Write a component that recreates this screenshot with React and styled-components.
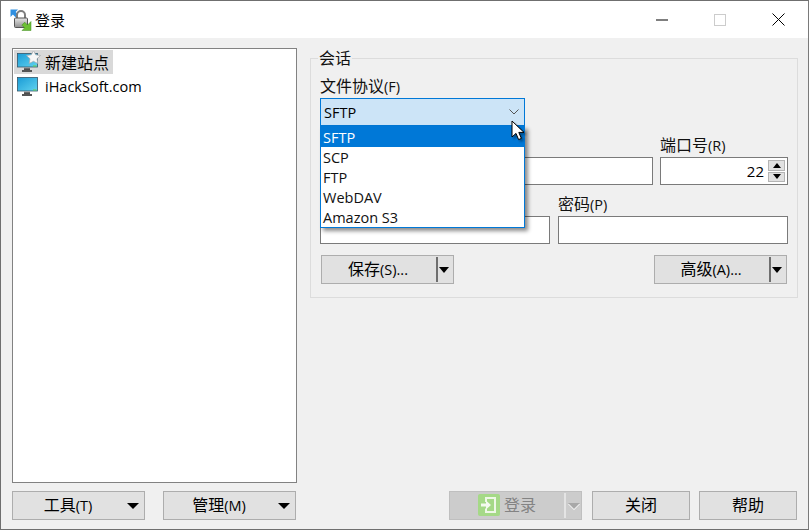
import React from "react";
import styled, { createGlobalStyle } from "styled-components";

const Global = createGlobalStyle`
  html, body { margin: 0; padding: 0; background: #f0f0f0; }
  * { box-sizing: border-box; }
  body { font-family: "Open Sans", "Noto Sans CJK SC", sans-serif; font-size: 14.5px; color: #111; }
`;

const Win = styled.div`
  width: 809px; height: 530px; border: 1px solid #6f6f6f; border-right-color: #7a7a7a;
  display: flex; flex-direction: column; background: #f0f0f0; overflow: hidden;
`;
const TitleBar = styled.div`
  height: 37px; background: #fff; display: flex; align-items: center; padding-left: 9px; flex: none;
`;
const TitleText = styled.span`
  font-size: 15px; margin-left: 3px; flex: 1; color: #000;
`;
const Ctl = styled.div`
  width: ${p => p.$w || 58}px; height: 37px; display: flex; align-items: center; justify-content: center;
`;
const Client = styled.div`
  flex: 1; min-height: 0; display: grid; grid-template-columns: 285px 1fr;
  grid-template-rows: 1fr 29px; column-gap: 13px; row-gap: 8px; padding: 10px 10px 9px 11px;
`;
const Tree = styled.div`
  background: #fff; border: 1px solid #828282; padding: 1px; display: flex; flex-direction: column; align-items: flex-start;
`;
const TreeItem = styled.div`
  height: 24px; display: flex; align-items: center; gap: 4px; padding: 0 3px 0 3px; width: ${p => p.$w || "auto"};
  background: ${p => (p.$sel ? "#d9d9d9" : "transparent")}; font-size: 14.5px; color: #000; white-space: nowrap;
`;
const Cjk = styled.span`
  font-size: 16px; line-height: 20px;
`;
const TreeCjk = styled(Cjk)`
  margin-top: 2px;
`;
const Group = styled.div`
  position: relative; margin-top: 10px; height: 240px; border: 1px solid #dcdcdc; padding: 18px 9px 0 9px;
`;
const Legend = styled.span`
  position: absolute; left: 7px; top: -11px; line-height: 20px; background: #f0f0f0; padding: 0 1px; height: 17px; overflow: visible;
`;
const Field = styled.div`
  position: relative; display: flex; flex-direction: column; min-width: 0;
`;
const Label = styled.label`
  height: 20px; line-height: 16px; margin: -1px 0 2px; font-size: 14.5px; color: #111; white-space: nowrap;
`;
const SelectBox = styled.div`
  width: 205px; height: 28px; border: 1px solid #0078d7; background: #cce4f7; display: flex; align-items: center;
  justify-content: space-between; padding: 0 5px 0 3px; font-size: 14.5px; color: #000;
`;
const Menu = styled.div`
  position: absolute; left: 0; top: 49px; width: 205px; height: 102px; background: #fff; border: 1px solid #0078d7;
  box-shadow: 3px 3px 4px rgba(0,0,0,.45); z-index: 3;
`;
const MenuItem = styled.div`
  height: 20px; line-height: 21px; padding-left: 2px; font-size: 14.5px;
  background: ${p => (p.$sel ? "#0078d7" : "#fff")}; color: ${p => (p.$sel ? "#fff" : "#111")};
`;
const Pointer = styled.svg`
  position: absolute; left: 191px; top: 43px; z-index: 4; filter: drop-shadow(2px 2px 1px rgba(0,0,0,.35));
`;
const Row = styled.div`
  display: grid; grid-template-columns: ${p => p.$cols}; column-gap: ${p => p.$gap}px; margin-top: 10px;
`;
const Input = styled.div`
  height: 28px; background: #fff; border: 1px solid #7a7a7a; display: flex; align-items: center; justify-content: flex-end;
  padding-right: 2px; font-size: 14.5px; color: #000;
`;
const PortValue = styled.span`
  margin-right: 4px; font-size: 15px;
`;
const Spin = styled.div`
  width: 17px; height: 22px; display: flex; flex-direction: column; gap: 1px;
`;
const SpinBtn = styled.div`
  flex: 1; background: #e1e1e1; border: 1px solid #b4b4b4; display: flex; align-items: center; justify-content: center;
`;
const Tri = styled.i`
  display: block; width: 0; height: 0; flex: none;
  border-left: ${p => p.$w}px solid transparent; border-right: ${p => p.$w}px solid transparent;
  ${p => (p.$up ? `border-bottom: ${p.$h}px solid ${p.$c || "#000"};` : `border-top: ${p.$h}px solid ${p.$c || "#000"};`)}
  ${p => p.$glow ? "filter: drop-shadow(0 1px 0 #fff);" : ""}
`;
const ButtonRow = styled.div`
  display: flex; justify-content: space-between; margin: 11px 1px 0;
`;
const Btn = styled.div`
  width: ${p => p.$w}px; height: 29px; flex: none; display: flex; align-items: center;
  background: ${p => (p.$off ? "#cccccc" : "#e1e1e1")}; border: 1px solid ${p => (p.$off ? "#bfbfbf" : "#adadad")};
  font-size: 14.5px; color: ${p => (p.$off ? "#838383" : "#000")}; position: relative;
`;
const BtnLabel = styled.span`
  flex: 1; display: flex; align-items: center; justify-content: center; gap: 4px; white-space: nowrap;
  padding-left: ${p => p.$pl || 0}px; padding-right: ${p => p.$prr || 0}px; margin-top: -1px;
`;
const Divider = styled.span`
  width: 2px; height: 25px; flex: none; background: ${p => (p.$off ? "#e4e4e4" : "#6e6e6e")};
`;
const ArrowSlot = styled.span`
  width: ${p => p.$w || 15}px; flex: none; display: flex; justify-content: center; padding-right: ${p => p.$pr || 0}px;
`;
const FooterLeft = styled.div`
  display: flex; justify-content: space-between; padding-right: 1px;
`;
const FooterRight = styled.div`
  display: flex; justify-content: flex-end; gap: 9px; padding-right: 1px;
`;
const FooterMain = styled.div`
  display: flex; gap: 10px;
`;

const Monitor = ({ star }) => (
  <svg width="24" height="22" viewBox="0 0 24 22" style={{ flex: "none" }}>
    <defs>
      <linearGradient id={star ? "sa" : "sb"} x1="0" y1="0" x2="1" y2="1">
        <stop offset="0" stopColor="#1a9bd6" />
        <stop offset="1" stopColor="#62d3ef" />
      </linearGradient>
      <linearGradient id={star ? "ba" : "bb"} x1="0" y1="0" x2="0" y2="1">
        <stop offset="0" stopColor="#8a8a8a" />
        <stop offset="1" stopColor="#3e3e3e" />
      </linearGradient>
    </defs>
    <rect x="0.5" y="2.5" width="20" height="13.5" fill={`url(#${star ? "sa" : "sb"})`} stroke="#33566a" strokeWidth=".8" />
    <rect x="16" y="14.5" width="3.5" height="1" fill="#6bd04a" />
    <rect x="7" y="16.5" width="6" height="2.5" fill={`url(#${star ? "ba" : "bb"})`} />
    <rect x="5" y="19" width="10" height="2" fill="#555" />
    {star && <path d="M16.5 -0.5l2.2 4.3 4.8.7-3.5 3.3.8 4.7-4.3-2.2-4.3 2.2.8-4.7-3.5-3.3 4.8-.7z" fill="#f7f7f7" stroke="#a4a8ac" strokeWidth=".7" />}
  </svg>
);

const AppIcon = () => (
  <svg width="22" height="22" viewBox="0 0 22 22" style={{ flex: "none" }}>
    <defs>
      <linearGradient id="lockb" x1="0" y1="0" x2="0" y2="1">
        <stop offset="0" stopColor="#e6e6e6" />
        <stop offset="1" stopColor="#8f8f8f" />
      </linearGradient>
    </defs>
    <path d="M0.5 0.5h7.5l-2.4 2.4 2.6 2.6-2.7 2.7-2.6-2.6-2.4 2.4z" fill="#2f8fe0" />
    <path d="M7 9.5V6a4 4 0 0 1 8 0v3.5" fill="none" stroke="#7d7d7d" strokeWidth="2" />
    <rect x="4.5" y="9" width="13" height="9.5" rx="1" fill="url(#lockb)" stroke="#555" />
    <path d="M21 21.5h-9l2.6-2.6-2.8-2.8 2.9-2.9 2.8 2.8 3.5-3.5z" fill="#6cc034" stroke="#3f8a1c" strokeWidth=".5" />
  </svg>
);

const LoginIcon = () => (
  <svg width="22" height="22" viewBox="0 0 22 22" style={{ flex: "none" }}>
    <rect x="0" y="0" width="22" height="22" rx="2" fill="#a5d987" />
    <path d="M7 3h11v16H7v-4.5h2V17h7V5H9v3H7z" fill="#eef7e6" />
    <path d="M3 9.5h5V6.5l5 4.5-5 4.5v-3H3z" fill="#f4faef" />
  </svg>
);

export default function App() {
  return (
    <Win>
      <Global />
      <TitleBar>
        <AppIcon />
        <TitleText>登录</TitleText>
        <Ctl>
          <svg width="12" height="2"><rect width="12" height="1" y="0.5" fill="#000" /></svg>
        </Ctl>
        <Ctl>
          <svg width="12" height="12"><rect x=".5" y=".5" width="11" height="11" fill="none" stroke="#cccccc" /></svg>
        </Ctl>
        <Ctl $w={59}>
          <svg width="13" height="13"><path d="M.5.5l12 12M12.5.5l-12 12" stroke="#000" fill="none" /></svg>
        </Ctl>
      </TitleBar>
      <Client>
        <Tree>
          <TreeItem $sel $w="99px"><Monitor star /><TreeCjk>新建站点</TreeCjk></TreeItem>
          <TreeItem><Monitor />iHackSoft.com</TreeItem>
        </Tree>
        <Group>
          <Legend><Cjk>会话</Cjk></Legend>
          <Field>
            <Label><Cjk>文件协议</Cjk>(F)</Label>
            <SelectBox>
              SFTP
              <svg width="10" height="6"><path d="M.5.5L5 5 9.5.5" fill="none" stroke="#555" /></svg>
            </SelectBox>
            <Menu>
              <MenuItem $sel>SFTP</MenuItem>
              <MenuItem>SCP</MenuItem>
              <MenuItem>FTP</MenuItem>
              <MenuItem>WebDAV</MenuItem>
              <MenuItem>Amazon S3</MenuItem>
            </Menu>
            <Pointer width="16" height="22" viewBox="0 0 16 22">
              <path d="M1 1v16l4-3.6 2.6 6.2 2.8-1.2L7.8 12.4H13z" fill="#fff" stroke="#000" strokeWidth="1" />
            </Pointer>
          </Field>
          <Row $cols="333px 128px" $gap={7}>
            <Field>
              <Label />
              <Input />
            </Field>
            <Field>
              <Label><Cjk>端口号</Cjk>(R)</Label>
              <Input>
                <PortValue>22</PortValue>
                <Spin>
                  <SpinBtn><Tri $up $w={4} $h={5} /></SpinBtn>
                  <SpinBtn><Tri $w={4} $h={5} /></SpinBtn>
                </Spin>
              </Input>
            </Field>
          </Row>
          <Row $cols="230px 230px" $gap={8}>
            <Field>
              <Label />
              <Input />
            </Field>
            <Field>
              <Label><Cjk>密码</Cjk>(P)</Label>
              <Input />
            </Field>
          </Row>
          <ButtonRow>
            <Btn $w={133}>
              <BtnLabel $prr={2}><span><Cjk>保存</Cjk>(S)...</span></BtnLabel>
              <Divider />
              <ArrowSlot $pr={3}><Tri $w={5} $h={6} /></ArrowSlot>
            </Btn>
            <Btn $w={133}>
              <BtnLabel $prr={2}><span><Cjk>高级</Cjk>(A)...</span></BtnLabel>
              <Divider />
              <ArrowSlot $pr={3}><Tri $w={5} $h={6} /></ArrowSlot>
            </Btn>
          </ButtonRow>
        </Group>
        <FooterLeft>
          <Btn $w={133}>
            <BtnLabel $pl={1}><span><Cjk>工具</Cjk>(T)</span></BtnLabel>
            <ArrowSlot $w={22}><Tri $w={6} $h={6} /></ArrowSlot>
          </Btn>
          <Btn $w={133}>
            <BtnLabel $pl={1}><span><Cjk>管理</Cjk>(M)</span></BtnLabel>
            <ArrowSlot $w={22}><Tri $w={6} $h={6} /></ArrowSlot>
          </Btn>
        </FooterLeft>
        <FooterRight>
          <FooterMain>
            <Btn $w={133} $off>
              <BtnLabel><LoginIcon /><Cjk>登录</Cjk></BtnLabel>
              <Divider $off />
              <ArrowSlot><Tri $w={6} $h={6} $c="#a8a8a8" $glow /></ArrowSlot>
            </Btn>
            <Btn $w={98}><BtnLabel><Cjk>关闭</Cjk></BtnLabel></Btn>
          </FooterMain>
          <Btn $w={98}><BtnLabel><Cjk>帮助</Cjk></BtnLabel></Btn>
        </FooterRight>
      </Client>
    </Win>
  );
}
